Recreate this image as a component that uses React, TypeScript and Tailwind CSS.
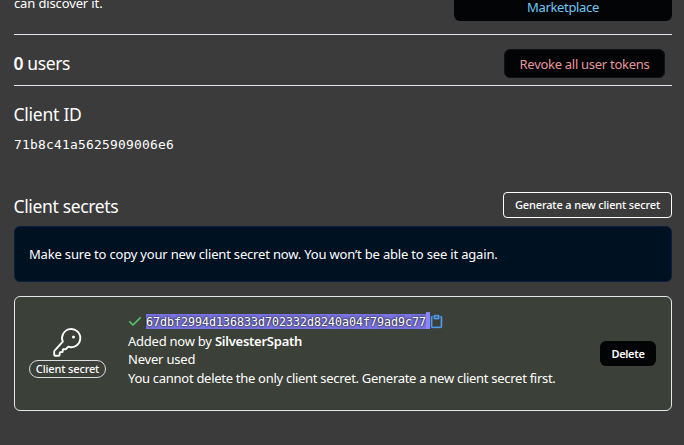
import type { ReactNode } from 'react';

function CheckIcon() {
  return (
    <svg width="16" height="16" viewBox="0 0 16 16" fill="#57c66a" stroke="#57c66a" strokeWidth="0.2" className="-ml-px shrink-0">
      <path d="M13.78 4.22a.75.75 0 0 1 0 1.06l-7.25 7.25a.75.75 0 0 1-1.06 0L2.22 9.28a.751.751 0 0 1 .018-1.042.751.751 0 0 1 1.042-.018L6 10.94l6.72-6.72a.75.75 0 0 1 1.06 0Z" />
    </svg>
  );
}

function PasteIcon() {
  return (
    <svg width="15" height="15" viewBox="0 0 16 16" fill="#4f9cf0" stroke="#4f9cf0" strokeWidth="0.3" className="-ml-[0.5px] mt-px shrink-0">
      <path d="M3.626 3.533a.249.249 0 0 0-.126.217v9.5c0 .138.112.25.25.25h8.5a.25.25 0 0 0 .25-.25v-9.5a.249.249 0 0 0-.126-.217.75.75 0 0 1 .752-1.298c.541.313.874.89.874 1.515v9.5A1.75 1.75 0 0 1 12.25 15h-8.5A1.75 1.75 0 0 1 2 13.25v-9.5c0-.625.333-1.202.874-1.515a.75.75 0 0 1 .752 1.298ZM5.75 1h4.5a.75.75 0 0 1 .75.75v3a.75.75 0 0 1-.75.75h-4.5A.75.75 0 0 1 5 4.75v-3A.75.75 0 0 1 5.75 1Zm.75 3h3V2.5h-3Z" />
    </svg>
  );
}

function KeyIcon() {
  return (
    <svg width="32" height="32" viewBox="0 0 32 32" fill="none" stroke="#fff" strokeWidth="1.9" strokeLinejoin="round">
      <path d="M10.8 14.6a9.1 9.1 0 1 1 5.5 5.1l-1.900 1.900c-.5.5-.8.6-1.400.6h-1.700c-.4 0-.6.2-.6.6v1.400c0 .5-.3.900-.900.900H8.500c-.5 0-.8.3-.8.8v1.600c0 .900-.4 1.300-1.200 1.300H3.200c-.6 0-1-.4-1-1v-3c0-.7.2-1.100.6-1.500Z" />
      <circle cx="21.500" cy="9.900" r="1.500" fill="#fff" stroke="none" />
    </svg>
  );
}

function Line({ children, className }: { children: ReactNode; className: string }) {
  return <p className={`whitespace-nowrap text-[13px] leading-[18px] ${className}`}>{children}</p>;
}

export default function App() {
  return (
    <main className="h-[445px] w-[684px] overflow-hidden bg-[#3b3b3b] pl-3.5 pr-3 font-['Noto_Sans',sans-serif] text-white">
      <section className="flex h-[35px] items-start justify-between border-b border-[#e4e1f0]">
        <p className="-mt-[6px] whitespace-nowrap text-[13px] leading-[18px] tracking-[-0.13px]">can discover it.</p>
        <div className="-mt-[10px] flex h-[31px] w-[218px] items-center justify-center rounded-md bg-[#030406] pt-[3px] text-[13px] leading-[18px] tracking-[-0.35px] text-[#6fc8f5]">
          Marketplace
        </div>
      </section>

      <section className="flex h-[51px] items-center justify-between border-b border-[#e4e1f0] pr-[7px]">
        <h3 className="-ml-[0.5px] mt-[5px] text-[17.5px] leading-6 tracking-[-0.4px]">
          <b className="font-semibold">0</b> users
        </h3>
        <button className="mt-[7px] h-[29px] w-[161px] whitespace-nowrap rounded-md border border-[#111213] bg-[#030406] text-[13px] leading-[18px] tracking-[-0.28px] text-[#e5989b]">
          Revoke all user tokens
        </button>
      </section>

      <section className="h-[106px] pt-4">
        <h3 className="-ml-[0.5px] text-[17.5px] leading-6 tracking-[-0.25px]">Client ID</h3>
        <code className="mt-2.5 block font-['DejaVu_Sans_Mono',monospace] text-[12.9px] leading-[18px] tracking-[0.234px]">
          71b8c41a5625909006e6
        </code>
      </section>

      <section className="flex h-[34px] items-start justify-between">
        <h3 className="-ml-[0.5px] mt-0.5 text-[17.5px] leading-6 tracking-[-0.35px]">Client secrets</h3>
        <button className="h-[26px] w-[169px] whitespace-nowrap rounded-[4px] border border-white text-[11px] font-medium leading-4 tracking-[-0.15px]">
          Generate a new client secret
        </button>
      </section>

      <section className="flex h-14 items-center rounded-md border border-[#05203f] bg-[#001122] pl-3.5">
        <Line className="tracking-[-0.18px]">Make sure to copy your new client secret now. You won’t be able to see it again.</Line>
      </section>

      <section className="mt-3.5 flex h-[115px] rounded-md border border-[#e4e6e8] bg-[#3b4038] pl-3.5 pr-[15px]">
        <div className="flex w-[77px] flex-col items-center pt-[30px]">
          <KeyIcon />
          <span className="mt-[1px] flex h-[18px] w-[77px] items-center justify-center whitespace-nowrap rounded-full border border-[#d8dbe0] text-[11px] font-medium leading-4 tracking-[-0.15px]">
            Client secret
          </span>
        </div>
        <div className="ml-[22px] flex-1 pt-4">
          <div className="flex h-[19px] items-start">
            <CheckIcon />
            <code className="ml-[3px] mt-px h-[15px] whitespace-nowrap bg-[#7a74e4] font-['DejaVu_Sans_Mono',monospace] text-[11.63px] leading-4 [text-shadow:0_0_2px_#222,0_0_3px_#222]">
              67dbf2994d136833d702332d8240a04f79ad9c77
            </code>
            <span className="-mt-px h-[17px] w-1 bg-[#8b85fb]" />
            <PasteIcon />
          </div>
          <Line className="tracking-[-0.24px]">
            Added now by <b className="font-semibold">SilvesterSpath</b>
          </Line>
          <Line className="tracking-[-0.2px]">Never used</Line>
          <Line className="mt-px tracking-[-0.285px]">You cannot delete the only client secret. Generate a new client secret first.</Line>
        </div>
        <button className="mt-11 h-[25px] w-14 rounded-md bg-[#030406] text-[11px] font-semibold leading-4 tracking-[-0.3px]">Delete</button>
      </section>
    </main>
  );
}
